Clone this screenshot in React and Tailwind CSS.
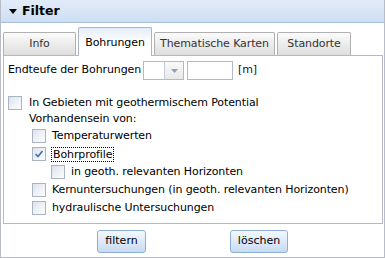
import React from "react";

function Check({ checked }) {
  return (
    <span className="relative inline-block w-[14px] h-[14px] shrink-0 border border-[#a9b3c1] bg-gradient-to-br from-[#dce2ea] via-[#eef1f5] to-[#fbfcfd]">
      {checked && (
        <svg className="absolute left-[1px] top-[1px]" width="10" height="10" viewBox="0 0 10 10">
          <path d="M1.5 5 L4 7.5 L8.5 2" fill="none" stroke="#3d6fb3" strokeWidth="1.6" />
        </svg>
      )}
    </span>
  );
}

function Row({ indent, checked, children, focus }) {
  return (
    <div className={`flex items-center h-[18px] ${indent}`}>
      <Check checked={checked} />
      <span className={`ml-[6px] ${focus ? "outline outline-1 outline-dotted outline-black px-[1px] -ml-[1px] leading-[13px]" : ""}`}>{children}</span>
    </div>
  );
}

export default function App() {
  return (
    <div
      className="w-[385px] h-[258px] border-l border-r border-b border-[#b7bcc6] bg-white text-black text-[11px] tracking-[-0.1px]"
      style={{ fontFamily: '"DejaVu Sans", Verdana, sans-serif' }}
    >
      {/* header */}
      <div className="h-[23px] border-b border-[#a9bfd9] bg-gradient-to-b from-[#e2ecf8] to-[#cddef3] flex items-center pl-[8px]">
        <svg width="8" height="5" viewBox="0 0 8 5" className="mr-[5px]">
          <path d="M0 0 L8 0 L4 5 Z" fill="#000" />
        </svg>
        <span className="font-bold text-[12.5px] tracking-normal">Filter</span>
      </div>

      <div className="pl-[2px] pr-[1px]">
        {/* tab strip */}
        <div className="h-[32px] flex items-end gap-[2px] pl-0">
          <div className="w-[73px] h-[23px] border border-b-0 border-[#b0b0b0] rounded-t-[2px] bg-gradient-to-b from-[#fbfbfb] to-[#dedede] flex items-center justify-center text-[#333]">
            Info
          </div>
          <div className="relative z-10 -mb-px w-[74px] h-[29px] border border-b-0 border-[#aab4c4] rounded-t-[2px] bg-gradient-to-b from-[#e3edf9] via-white to-white flex items-center justify-center pt-[3px]">
            Bohrungen
          </div>
          <div className="w-[121px] h-[23px] border border-b-0 border-[#b0b0b0] rounded-t-[2px] bg-gradient-to-b from-[#fbfbfb] to-[#dedede] flex items-center justify-center text-[#333]">
            Thematische Karten
          </div>
          <div className="w-[74px] h-[23px] border border-b-0 border-[#b0b0b0] rounded-t-[2px] bg-gradient-to-b from-[#fbfbfb] to-[#dedede] flex items-center justify-center text-[#333]">
            Standorte
          </div>
        </div>

        {/* body */}
        <div className="h-[169px] border border-[#b5b8c8] pt-[5px] pl-[4px]">
          <div className="flex items-center h-[19px]">
            <span className="w-[135px] whitespace-nowrap">Endteufe der Bohrungen</span>
            <div className="flex h-[19px] border border-[#b5b8c8]">
              <div className="w-[21px] bg-white border-r border-[#c9ccd6]" />
              <div className="w-[18px] bg-gradient-to-b from-[#fafafa] to-[#e8e8e8] flex items-center justify-center">
                <svg width="7" height="4" viewBox="0 0 7 4">
                  <path d="M0 0 L7 0 L3.5 4 Z" fill="#8da0bb" />
                </svg>
              </div>
            </div>
            <div className="ml-[3px] w-[46px] h-[19px] border border-[#b5b8c8] bg-white" />
            <span className="ml-[5px] text-[#101040]">[m]</span>
          </div>

          <div className="mt-[14px] flex items-center h-[18px]">
            <Check />
            <span className="ml-[7px] whitespace-nowrap">In Gebieten mit geothermischem Potential</span>
          </div>
          <div className="h-[15px] flex items-center pl-[21px]">Vorhandensein von:</div>
          <Row indent="pl-[24px]">Temperaturwerten</Row>
          <Row indent="pl-[24px]" checked focus>Bohrprofile</Row>
          <Row indent="pl-[43px]">in geoth. relevanten Horizonten</Row>
          <Row indent="pl-[24px]">Kernuntersuchungen (in geoth. relevanten Horizonten)</Row>
          <Row indent="pl-[24px]">hydraulische Untersuchungen</Row>
        </div>

        {/* buttons */}
        <div className="h-[33px] flex items-center pt-[1px]">
          <div className="ml-[94px] w-[49px] h-[23px] rounded-[3px] border border-[#8eaed6] bg-gradient-to-b from-[#f3f8fd] to-[#c8dbf2] flex items-center justify-center tracking-normal">
            filtern
          </div>
          <div className="ml-[84px] w-[58px] h-[23px] rounded-[3px] border border-[#8eaed6] bg-gradient-to-b from-[#f3f8fd] to-[#c8dbf2] flex items-center justify-center tracking-normal">
            löschen
          </div>
        </div>
      </div>
    </div>
  );
}
